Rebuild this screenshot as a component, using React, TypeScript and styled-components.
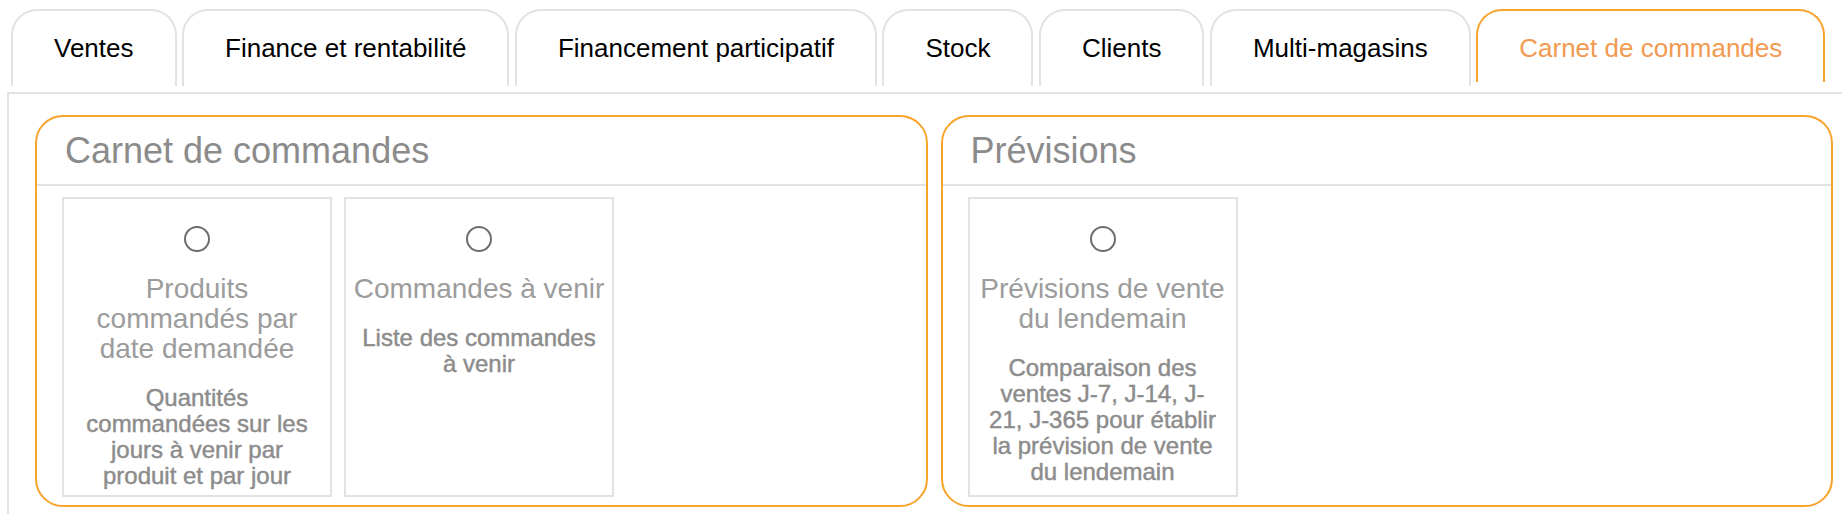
import React from 'react'
import styled, { createGlobalStyle } from 'styled-components'

const GlobalStyle = createGlobalStyle`
  html, body {
    margin: 0;
    padding: 0;
    background: #ffffff;
    font-family: "Liberation Sans", Arial, Helvetica, sans-serif;
    overflow: hidden;
  }
`

const ORANGE = '#f8a42c'
const LINE = '#e2e2e2'

const Page = styled.div`
  width: 1842px;
  height: 514px;
  overflow: hidden;
`

const TabBar = styled.div`
  display: flex;
  align-items: flex-start;
  gap: 5.5px;
  padding: 9px 0 0 11px;
  height: 77px;
`

const Tab = styled.div<{ $active?: boolean }>`
  box-sizing: border-box;
  height: ${(p) => (p.$active ? '73px' : '77px')};
  padding: ${(p) => (p.$active ? '4px' : '0')} 41px 0;
  display: flex;
  align-items: center;
  justify-content: center;
  border: 2px solid ${(p) => (p.$active ? ORANGE : LINE)};
  border-bottom: none;
  border-radius: 26px 26px 0 0;
  font-size: 26px;
  white-space: nowrap;
  color: ${(p) => (p.$active ? '#f29a50' : '#000000')};
`

const Panel = styled.div`
  margin: 6px 0 0 7px;
  border-top: 2px solid ${LINE};
  border-left: 2px solid ${LINE};
  padding: 21px 0 0 26px;
  height: 420px;
`

const Sections = styled.div`
  width: 1798px;
  display: grid;
  grid-template-columns: 1fr 1fr;
  gap: 13px;
`

const Section = styled.section`
  box-sizing: border-box;
  height: 392px;
  border: 2px solid ${ORANGE};
  border-radius: 28px;
  display: flex;
  flex-direction: column;
`

const SectionHeader = styled.div`
  height: 67px;
  display: flex;
  align-items: center;
  padding-left: 28px;
  border-bottom: 2px solid ${LINE};
`

const SectionTitle = styled.h2`
  margin: 0;
  font-size: 36px;
  font-weight: 400;
  color: #8b8b8b;
`

const CardRow = styled.div`
  display: flex;
  gap: 12px;
  padding: 11px 25px 0;
`

const Card = styled.div`
  box-sizing: border-box;
  width: 270px;
  height: 300px;
  border: 2px solid ${LINE};
  padding: 27px 4px 0;
  display: flex;
  flex-direction: column;
  align-items: center;
  text-align: center;
  overflow: hidden;
`

const Radio = styled.span`
  box-sizing: border-box;
  width: 26px;
  height: 26px;
  border: 2px solid #6e6e6e;
  border-radius: 50%;
  flex: none;
`

const CardTitle = styled.div`
  margin-top: 22px;
  font-size: 28px;
  line-height: 30px;
  color: #9c9c9c;
`

const CardText = styled.div`
  margin-top: 21px;
  font-size: 24px;
  line-height: 26px;
  color: #8c8c8c;
  -webkit-text-stroke: 0.45px #8c8c8c;
`

type Report = { title: string[]; text: string[] }
type Group = { name: string; reports: Report[] }

const tabs = [
  'Ventes',
  'Finance et rentabilité',
  'Financement participatif',
  'Stock',
  'Clients',
  'Multi-magasins',
  'Carnet de commandes',
]

const groups: Group[] = [
  {
    name: 'Carnet de commandes',
    reports: [
      {
        title: ['Produits', 'commandés par', 'date demandée'],
        text: ['Quantités', 'commandées sur les', 'jours à venir par', 'produit et par jour'],
      },
      {
        title: ['Commandes à venir'],
        text: ['Liste des commandes', 'à venir'],
      },
    ],
  },
  {
    name: 'Prévisions',
    reports: [
      {
        title: ['Prévisions de vente', 'du lendemain'],
        text: [
          'Comparaison des',
          'ventes J-7, J-14, J-',
          '21, J-365 pour établir',
          'la prévision de vente',
          'du lendemain',
        ],
      },
    ],
  },
]

const Lines = ({ lines }: { lines: string[] }) => (
  <>
    {lines.map((l, i) => (
      <React.Fragment key={i}>
        {i > 0 && <br />}
        {l}
      </React.Fragment>
    ))}
  </>
)

export default function App() {
  return (
    <Page>
      <GlobalStyle />
      <TabBar>
        {tabs.map((t) => (
          <Tab key={t} $active={t === 'Carnet de commandes'}>
            {t}
          </Tab>
        ))}
      </TabBar>
      <Panel>
        <Sections>
          {groups.map((g) => (
            <Section key={g.name}>
              <SectionHeader>
                <SectionTitle>{g.name}</SectionTitle>
              </SectionHeader>
              <CardRow>
                {g.reports.map((r, i) => (
                  <Card key={i}>
                    <Radio />
                    <CardTitle>
                      <Lines lines={r.title} />
                    </CardTitle>
                    <CardText>
                      <Lines lines={r.text} />
                    </CardText>
                  </Card>
                ))}
              </CardRow>
            </Section>
          ))}
        </Sections>
      </Panel>
    </Page>
  )
}
